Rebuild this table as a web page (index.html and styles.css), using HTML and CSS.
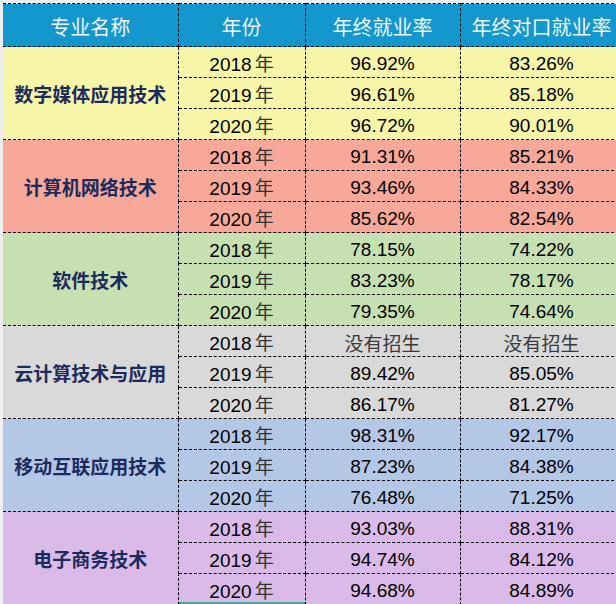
FILE: index.html
```html
<!DOCTYPE html>
<html lang="zh-CN">
<head>
<meta charset="utf-8">
<title>就业率</title>
<link rel="stylesheet" href="styles.css">
</head>
<body>
<div class="sheet">
<table class="grid">
<colgroup><col class="c-name"><col class="c-year"><col class="c-rate"><col class="c-rate2"></colgroup>
<thead>
<tr class="head"><th>专业名称</th><th>年份</th><th>年终就业率</th><th>年终对口就业率</th></tr>
</thead>
<tbody class="g-yellow">
<tr><td rowspan="3" class="name">数字媒体应用技术</td><td class="year">2018<span class="nian">年</span></td><td class="num">96.92%</td><td class="num">83.26%</td></tr>
<tr><td class="year">2019<span class="nian">年</span></td><td class="num">96.61%</td><td class="num">85.18%</td></tr>
<tr><td class="year">2020<span class="nian">年</span></td><td class="num">96.72%</td><td class="num">90.01%</td></tr>
</tbody>
<tbody class="g-salmon">
<tr><td rowspan="3" class="name">计算机网络技术</td><td class="year">2018<span class="nian">年</span></td><td class="num">91.31%</td><td class="num">85.21%</td></tr>
<tr><td class="year">2019<span class="nian">年</span></td><td class="num">93.46%</td><td class="num">84.33%</td></tr>
<tr><td class="year">2020<span class="nian">年</span></td><td class="num">85.62%</td><td class="num">82.54%</td></tr>
</tbody>
<tbody class="g-green">
<tr><td rowspan="3" class="name">软件技术</td><td class="year">2018<span class="nian">年</span></td><td class="num">78.15%</td><td class="num">74.22%</td></tr>
<tr><td class="year">2019<span class="nian">年</span></td><td class="num">83.23%</td><td class="num">78.17%</td></tr>
<tr><td class="year">2020<span class="nian">年</span></td><td class="num">79.35%</td><td class="num">74.64%</td></tr>
</tbody>
<tbody class="g-gray">
<tr><td rowspan="3" class="name">云计算技术与应用</td><td class="year">2018<span class="nian">年</span></td><td class="none">没有招生</td><td class="none">没有招生</td></tr>
<tr><td class="year">2019<span class="nian">年</span></td><td class="num">89.42%</td><td class="num">85.05%</td></tr>
<tr><td class="year">2020<span class="nian">年</span></td><td class="num">86.17%</td><td class="num">81.27%</td></tr>
</tbody>
<tbody class="g-blue">
<tr><td rowspan="3" class="name">移动互联应用技术</td><td class="year">2018<span class="nian">年</span></td><td class="num">98.31%</td><td class="num">92.17%</td></tr>
<tr><td class="year">2019<span class="nian">年</span></td><td class="num">87.23%</td><td class="num">84.38%</td></tr>
<tr><td class="year">2020<span class="nian">年</span></td><td class="num">76.48%</td><td class="num">71.25%</td></tr>
</tbody>
<tbody class="g-purple">
<tr><td rowspan="3" class="name">电子商务技术</td><td class="year">2018<span class="nian">年</span></td><td class="num">93.03%</td><td class="num">88.31%</td></tr>
<tr><td class="year">2019<span class="nian">年</span></td><td class="num">94.74%</td><td class="num">84.12%</td></tr>
<tr><td class="year selected">2020<span class="nian">年</span></td><td class="num">94.68%</td><td class="num">84.89%</td></tr>
</tbody>
</table>
</div>
</body>
</html>
```

FILE: styles.css
```css
html, body {
  margin: 0;
  padding: 0;
  background: #eeeeee;
  overflow: hidden;
}

.sheet {
  padding: 3px 0 0 3px;
}

.grid {
  border-collapse: collapse;
  table-layout: fixed;
  width: 620px;
}

.c-name { width: 175px; }
.c-year { width: 127px; }
.c-rate { width: 155px; }
.c-rate2 { width: 163px; }

.grid th,
.grid td {
  border: 1px dashed #000;
  padding: 0;
  text-align: center;
  vertical-align: middle;
}

.grid th:first-child,
.grid td.name {
  border-left: none;
}

.head {
  height: 43px;
}

.head th {
  background: #1397cc;
  color: #eef6fa;
  font: 400 20px/1 "Noto Sans CJK SC", sans-serif;
  padding-top: 3px;
}

.grid tbody tr {
  height: 31px;
}

.grid td {
  font: 19px/1 "Liberation Sans", "Noto Sans CJK SC", sans-serif;
  color: #000;
  padding-top: 3px;
}

.grid td.name {
  font: 700 19px/1 "Noto Sans CJK SC", sans-serif;
  color: #1d2a5c;
  padding-top: 0;
}

.nian {
  font-family: "Noto Sans CJK SC", sans-serif;
  font-weight: 400;
  color: #333;
  margin-left: 3px;
}

.grid td.none {
  font: 400 19px/1 "Noto Sans CJK SC", sans-serif;
  color: #3a3a3a;
}

.grid td.selected {
  box-shadow: inset 0 -2px 0 #45a596;
}

.g-yellow td { background: #f7f5a8; }
.g-salmon td { background: #f7a898; }
.g-green td { background: #c6e0b2; }
.g-gray td { background: #d9d9d9; }
.g-blue td { background: #b4c7e7; }
.g-purple td { background: #d9bae8; }
```
